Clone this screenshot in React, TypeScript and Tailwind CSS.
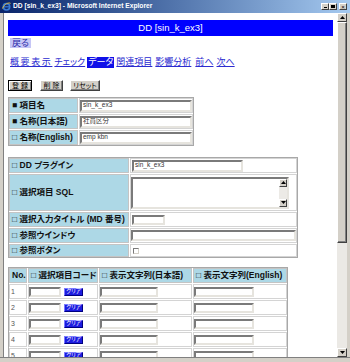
import React from "react";

const JP = "font-['Liberation_Sans','Noto_Sans_CJK_JP',sans-serif] [font-feature-settings:'palt']";

function Inset({ className, children }: { className: string; children?: React.ReactNode }) {
  return (
    <div
      className={
        "bg-white border-2 border-t-[#7a7a7a] border-l-[#7a7a7a] border-b-[#e6e4de] border-r-[#e6e4de] flex items-center pl-[1px] overflow-hidden whitespace-nowrap text-[6.5px] leading-none text-[#333] " +
        className
      }
    >
      {children}
    </div>
  );
}

function Label({ className, children }: { className: string; children: React.ReactNode }) {
  return (
    <div
      className={
        "bg-[#add8e6] border border-[#c4c4c4] flex items-center pl-[2px] text-[8.5px] font-bold text-[#111] whitespace-nowrap overflow-hidden leading-none " +
        className
      }
    >
      {children}
    </div>
  );
}

function Cell({ className, children }: { className: string; children?: React.ReactNode }) {
  return <div className={"border border-[#d4d4d4] flex items-center " + className}>{children}</div>;
}

function TitleButton({ children }: { children: React.ReactNode }) {
  return (
    <div className="w-[8px] h-[7px] bg-[#d4d0c8] border border-t-white border-l-white border-b-[#404040] border-r-[#404040] flex items-center justify-center text-[6px] leading-none text-black">
      {children}
    </div>
  );
}

function Btn({ def, className, children }: { def?: boolean; className: string; children: React.ReactNode }) {
  return (
    <div
      className={
        "h-[11px] bg-[#d4d0c8] flex items-center justify-center text-[7px] leading-none text-black whitespace-nowrap " +
        (def
          ? "border border-black shadow-[inset_1px_1px_0_#fff,inset_-1px_-1px_0_#808080] "
          : "border border-t-white border-l-white border-b-[#404040] border-r-[#404040] shadow-[inset_-1px_-1px_0_#808080] ") +
        className
      }
    >
      {children}
    </div>
  );
}

function Arrow({ up, className }: { up?: boolean; className: string }) {
  return (
    <div
      className={
        "bg-[#d4d0c8] border border-t-white border-l-white border-b-[#404040] border-r-[#404040] flex items-center justify-center " +
        className
      }
    >
      <svg width="5" height="3" viewBox="0 0 5 3">
        {up ? <path d="M0 3 L2.5 0 L5 3 Z" fill="#000" /> : <path d="M0 0 L2.5 3 L5 0 Z" fill="#000" />}
      </svg>
    </div>
  );
}

function ClearBtn() {
  return (
    <div className="ml-[3px] w-[19px] h-[8px] bg-[#1c1ce0] border border-t-[#7a7aff] border-l-[#7a7aff] border-b-[#000080] border-r-[#000080] flex items-center justify-center text-[5.5px] leading-none text-white">
      クリア
    </div>
  );
}

export default function App() {
  const rows = [1, 2, 3, 4, 5];
  return (
    <div className={"w-[350px] h-[362px] overflow-hidden bg-[#d4d0c8] flex flex-col " + JP}>
      {/* title bar */}
      <div className="h-[13px] shrink-0 bg-linear-to-r from-[#0a246a] to-[#a6caf0] flex items-center">
        <div className="ml-[2px] w-[9px] h-[9px] flex items-center justify-center">
          <svg width="9" height="9" viewBox="0 0 9 9">
            <circle cx="4.5" cy="4.8" r="3.2" fill="none" stroke="#3a7bd5" strokeWidth="1.6" />
            <path d="M1.6 4.8 H7.4" stroke="#3a7bd5" strokeWidth="1.2" />
            <path d="M0.5 6.5 C2 2 7 0 8.6 1.4" fill="none" stroke="#f0c030" strokeWidth="0.9" />
          </svg>
        </div>
        <div className="ml-[2px] text-[6.7px] leading-none text-white font-bold whitespace-nowrap font-['Liberation_Sans',sans-serif]">
          DD [sin_k_ex3] - Microsoft Internet Explorer
        </div>
        <div className="ml-auto mr-[3px] flex items-center">
          <TitleButton>
            <span className="block w-[3px] h-[1px] bg-black mt-[2px]" />
          </TitleButton>
          <TitleButton>
            <span className="block w-[4px] h-[3px] border border-black border-t-2" />
          </TitleButton>
          <div className="ml-[2px]">
            <TitleButton>×</TitleButton>
          </div>
        </div>
      </div>

      {/* middle */}
      <div className="flex flex-1 min-h-0">
        <div className="w-[3px] bg-[#d4d0c8]" />
        <div className="w-[1px] bg-[#808080]" />
        <div className="flex-1 min-w-0 bg-white overflow-hidden pt-[7px] px-[4px]">
          <div className="h-[16px] bg-[#0000ff] text-white text-[9.5px] flex items-center justify-center leading-none font-['Liberation_Sans',sans-serif]">
            DD [sin_k_ex3]
          </div>

          <div className="mt-[2px] h-[10px] flex items-center">
            <span className="ml-[2px] px-[2px] bg-[#c6c6f6] text-[#2a2aa8] text-[9px] leading-[10px]">戻る</span>
          </div>

          {/* nav */}
          <div className="mt-[8px] h-[12px] flex items-center gap-[2px] ml-[2px] text-[9px] leading-[11px] text-[#2b2bd0] whitespace-nowrap">
            <span className="underline tracking-[1.6px]">概要表示</span>
            <span className="underline">チェック</span>
            <span className="bg-[#1010e8] text-white px-[1px]">データ</span>
            <span className="underline">関連項目</span>
            <span className="underline ml-[1px]">影響分析</span>
            <span className="underline ml-[2px]">前へ</span>
            <span className="underline ml-[1px]">次へ</span>
          </div>

          {/* buttons */}
          <div className="mt-[12px] flex items-center">
            <Btn def className="w-[24px]">登 録</Btn>
            <Btn className="w-[23px] ml-[8px]">削 除</Btn>
            <Btn className="w-[30px] ml-[7px]">リセット</Btn>
          </div>

          {/* table 1 */}
          <div className="mt-[6px] w-[186px] border border-[#a8a8a8] flex flex-col gap-[1px]">
            <div className="flex gap-[1px] h-[15px]">
              <Label className="w-[69px]">■ 項目名</Label>
              <Cell className="flex-1">
                <Inset className="w-[112px] h-[12px]">sin_k_ex3</Inset>
              </Cell>
            </div>
            <div className="flex gap-[1px] h-[15px]">
              <Label className="w-[69px]">■ 名称(日本語)</Label>
              <Cell className="flex-1">
                <Inset className="w-[112px] h-[12px]">社員区分</Inset>
              </Cell>
            </div>
            <div className="flex gap-[1px] h-[15px]">
              <Label className="w-[69px]">□ 名称(English)</Label>
              <Cell className="flex-1">
                <Inset className="w-[112px] h-[12px]">emp kbn</Inset>
              </Cell>
            </div>
          </div>

          {/* table 2 */}
          <div className="mt-[11px] w-[290px] border border-[#a8a8a8] flex flex-col gap-[1px]">
            <div className="flex gap-[1px] h-[15px]">
              <Label className="w-[120px]">□ DD プラグイン</Label>
              <Cell className="flex-1 pl-[1px]">
                <Inset className="w-[111px] h-[12px]">sin_k_ex3</Inset>
              </Cell>
            </div>
            <div className="flex gap-[1px] h-[37px]">
              <Label className="w-[120px]">□ 選択項目 SQL</Label>
              <Cell className="flex-1">
                <div className="w-[158px] h-[32px] bg-white border-2 border-t-[#7a7a7a] border-l-[#7a7a7a] border-b-[#e6e4de] border-r-[#e6e4de] flex justify-end">
                  <div className="w-[8px] h-full flex flex-col bg-[#eceae6]">
                    <Arrow up className="w-[8px] h-[8px]" />
                    <div className="flex-1" />
                    <Arrow className="w-[8px] h-[8px]" />
                  </div>
                </div>
              </Cell>
            </div>
            <div className="flex gap-[1px] h-[15px]">
              <Label className="w-[120px]">□ 選択入力タイトル (MD 番号)</Label>
              <Cell className="flex-1 pl-[1px]">
                <Inset className="w-[33px] h-[10px]" />
              </Cell>
            </div>
            <div className="flex gap-[1px] h-[15px]">
              <Label className="w-[120px]">□ 参照ウインドウ</Label>
              <Cell className="flex-1">
                <Inset className="w-[165px] h-[11px]" />
              </Cell>
            </div>
            <div className="flex gap-[1px] h-[13px]">
              <Label className="w-[120px]">□ 参照ボタン</Label>
              <Cell className="flex-1 pl-[2px]">
                <div className="w-[6px] h-[6px] bg-white border border-t-[#7a7a7a] border-l-[#7a7a7a] border-b-[#d4d0c8] border-r-[#d4d0c8]" />
              </Cell>
            </div>
          </div>

          {/* table 3 */}
          <div className="mt-[9px] w-[280px] border border-[#a8a8a8] flex flex-col gap-[1px]">
            <div className="flex gap-[1px] h-[15px]">
              <Label className="w-[18px] pl-[1px]">No.</Label>
              <Label className="w-[70px]">□ 選択項目コード</Label>
              <Label className="w-[93px]">□ 表示文字列(日本語)</Label>
              <Label className="w-[94px]">□ 表示文字列(English)</Label>
            </div>
            {rows.map((n) => (
              <div key={n} className="flex gap-[1px] h-[15px]">
                <Cell className="w-[18px] pl-[1px] text-[7px] leading-none text-[#555]">{n}</Cell>
                <Cell className="w-[70px]">
                  <Inset className="w-[32px] h-[10px]" />
                  <ClearBtn />
                </Cell>
                <Cell className="w-[93px]">
                  <Inset className="w-[58px] h-[10px]" />
                </Cell>
                <Cell className="w-[94px]">
                  <Inset className="w-[60px] h-[10px]" />
                </Cell>
              </div>
            ))}
          </div>
        </div>

        {/* scrollbar */}
        <div className="w-[10px] flex flex-col bg-[#ebe9e5]">
          <Arrow up className="w-[10px] h-[9px]" />
          <div className="h-[221px] bg-[#d4d0c8] border border-t-white border-l-white border-b-[#404040] border-r-[#404040] shadow-[inset_-1px_-1px_0_#808080]" />
          <div className="flex-1" />
          <Arrow className="w-[10px] h-[9px]" />
        </div>
        <div className="w-[3px] bg-[#d4d0c8]" />
      </div>

      <div className="h-[5px] shrink-0 border-t border-[#808080] bg-[#d4d0c8]" />
    </div>
  );
}
